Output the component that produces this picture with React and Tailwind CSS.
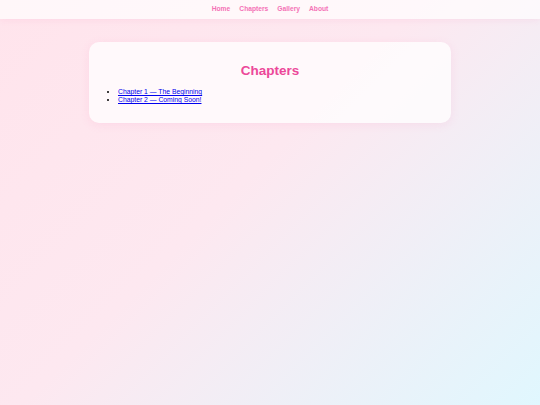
export default function App() {
  const links = ['Home', 'Chapters', 'Gallery', 'About'];
  return (
    <div
      className="min-h-screen w-full bg-[linear-gradient(135deg,#ffe4ec_0%,#fde8f0_45%,#e0f7fe_100%)]"
      style={{ fontFamily: '"Liberation Sans", Arial, sans-serif' }}
    >
      <nav className="h-[19px] flex items-center justify-center gap-[9px] bg-white/70 shadow-[0_1px_6px_rgba(244,114,182,0.12)]">
        {links.map(l => (
          <a key={l} href="#" className="text-[6.7px] font-bold text-[#f472b6]">
            {l}
          </a>
        ))}
      </nav>

      <div className="w-[362px] mx-auto mt-[23px] rounded-[10px] bg-white/75 shadow-[0_2px_10px_rgba(244,114,182,0.12)] px-[10px] pt-[21px] pb-[19px]">
        <h2 className="text-center text-[13.5px] leading-[16px] font-bold text-[#ec4899]">
          Chapters
        </h2>
        <ul className="list-disc pl-[19px] mt-[9px] text-[6.8px] leading-[8px]">
          <li>
            <a href="#" className="text-[#0000ee] underline">
              Chapter 1 — The Beginning
            </a>
          </li>
          <li>
            <a href="#" className="text-[#0000ee] underline">
              Chapter 2 — Coming Soon!
            </a>
          </li>
        </ul>
      </div>
    </div>
  );
}
